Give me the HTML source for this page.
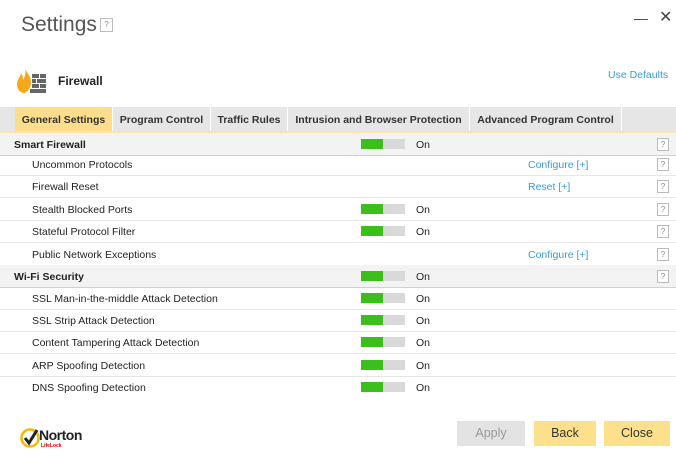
<!DOCTYPE html>
<html><head><style>
body{margin:0;width:676px;height:459px;background:#fff;font-family:"Liberation Sans",sans-serif;position:relative;overflow:hidden;color:#222}
.a{position:absolute}
.row{position:absolute;left:0;width:676px;height:22px;border-bottom:1px solid #e6e6e6;font-size:10.5px}
.row span.l{position:absolute;left:32px;top:6px}
.hdr{background:#f3f3f3;border-bottom:1px solid #d0d0d0}
.hdr span.l{left:14px;font-weight:bold}
.tg{position:absolute;left:361px;top:6px;width:44px;height:10px;background:#d9d9d9}
.tg:before{content:"";position:absolute;left:0;top:0;width:22px;height:10px;background:#3bbf1a}
.on{position:absolute;left:416px;top:6px}
.q{position:absolute;left:657px;top:5px;width:10px;height:11px;border:1px solid #bbb;font-size:8px;color:#888;text-align:center;line-height:11px;background:#fff}
.lk{position:absolute;left:528px;top:6px;color:#3a9ad9}
.tab{position:absolute;top:107px;height:24px;line-height:27px;font-size:10.5px;font-weight:bold;text-align:center;background:#e6e6e6;color:#333}
.btn{position:absolute;top:421px;height:25px;line-height:25px;text-align:center;font-size:12.5px}
</style></head><body>
<div class="a" style="left:21px;top:13px;font-size:21px;color:#555">Settings</div>
<div class="a" style="left:100px;top:18px;width:11px;height:12px;border:1px solid #bbb;font-size:8px;color:#888;text-align:center;line-height:12px">?</div>
<div class="a" style="left:634px;top:10px;font-size:14px;color:#444">—</div>
<div class="a" style="left:659px;top:7px;font-size:16px;color:#444">✕</div>
<svg class="a" style="left:17px;top:67px" width="30" height="27" viewBox="0 0 30 27">
<path d="M8 1C9 6 14 8 14 15C14 22 9 26 7 26C3 26 0 22 0 17C0 12 4 9 4 6C6 9 6 11 6 13C8 10 9 6 8 1Z" fill="#f6a81a"/>
<g fill="#666"><rect x="15" y="7" width="7" height="4"/><rect x="23" y="7" width="6" height="4"/><rect x="15" y="12" width="4" height="4"/><rect x="20" y="12" width="9" height="4"/><rect x="15" y="17" width="7" height="4"/><rect x="23" y="17" width="6" height="4"/><rect x="13" y="22" width="16" height="4"/></g></svg>
<div class="a" style="left:58px;top:74px;font-size:12px;font-weight:bold">Firewall</div>
<div class="a" style="left:608px;top:69px;font-size:10.5px;color:#3a9ad9">Use Defaults</div>
<div class="a" style="left:0;top:107px;width:676px;height:24px;background:#e6e6e6"></div>
<div class="tab" style="left:15px;width:97px;background:#fbdd8c">General Settings</div>
<div class="tab" style="left:113px;width:97px">Program Control</div>
<div class="tab" style="left:211px;width:76px">Traffic Rules</div>
<div class="tab" style="left:288px;width:181px">Intrusion and Browser Protection</div>
<div class="tab" style="left:470px;width:151px">Advanced Program Control</div>
<div class="a" style="left:112px;top:107px;width:1px;height:24px;background:#fff"></div>
<div class="a" style="left:210px;top:107px;width:1px;height:24px;background:#fff"></div>
<div class="a" style="left:287px;top:107px;width:1px;height:24px;background:#fff"></div>
<div class="a" style="left:469px;top:107px;width:1px;height:24px;background:#fff"></div>
<div class="a" style="left:621px;top:107px;width:1px;height:24px;background:#fff"></div>
<div class="a" style="left:0;top:131px;width:676px;height:2px;background:#fbe6a8"></div>
<div class="row hdr" style="top:133px"><span class="l">Smart Firewall</span><div class="tg"></div><span class="on">On</span><div class="q">?</div></div>
<div class="row" style="top:153px"><span class="l">Uncommon Protocols</span><span class="lk">Configure [+]</span><div class="q">?</div></div>
<div class="row" style="top:175px"><span class="l">Firewall Reset</span><span class="lk">Reset [+]</span><div class="q">?</div></div>
<div class="row" style="top:198px"><span class="l">Stealth Blocked Ports</span><div class="tg"></div><span class="on">On</span><div class="q">?</div></div>
<div class="row" style="top:220px"><span class="l">Stateful Protocol Filter</span><div class="tg"></div><span class="on">On</span><div class="q">?</div></div>
<div class="row" style="top:243px"><span class="l">Public Network Exceptions</span><span class="lk">Configure [+]</span><div class="q">?</div></div>
<div class="row hdr" style="top:265px"><span class="l">Wi-Fi Security</span><div class="tg"></div><span class="on">On</span><div class="q">?</div></div>
<div class="row" style="top:287px"><span class="l">SSL Man-in-the-middle Attack Detection</span><div class="tg"></div><span class="on">On</span></div>
<div class="row" style="top:309px"><span class="l">SSL Strip Attack Detection</span><div class="tg"></div><span class="on">On</span></div>
<div class="row" style="top:331px"><span class="l">Content Tampering Attack Detection</span><div class="tg"></div><span class="on">On</span></div>
<div class="row" style="top:354px"><span class="l">ARP Spoofing Detection</span><div class="tg"></div><span class="on">On</span></div>
<div class="row" style="top:376px;border-bottom:none"><span class="l">DNS Spoofing Detection</span><div class="tg"></div><span class="on">On</span></div>
<svg class="a" style="left:20px;top:428px" width="20" height="20" viewBox="0 0 20 20"><circle cx="10" cy="10" r="8.5" fill="none" stroke="#f6b800" stroke-width="2.5"/><path d="M5 10L9 15L17 2" fill="none" stroke="#222" stroke-width="3"/></svg>
<div class="a" style="left:39px;top:427px;font-size:14px;font-weight:bold;color:#222;letter-spacing:-0.5px">Norton</div>
<div class="a" style="left:41px;top:443px;font-size:5px;color:#c00;font-weight:bold">LifeLock</div>
<div class="btn" style="left:457px;width:68px;background:#e3e3e3;color:#999">Apply</div>
<div class="btn" style="left:534px;width:62px;background:#fde08b;color:#333">Back</div>
<div class="btn" style="left:604px;width:66px;background:#fde08b;color:#333">Close</div>
</body></html>
